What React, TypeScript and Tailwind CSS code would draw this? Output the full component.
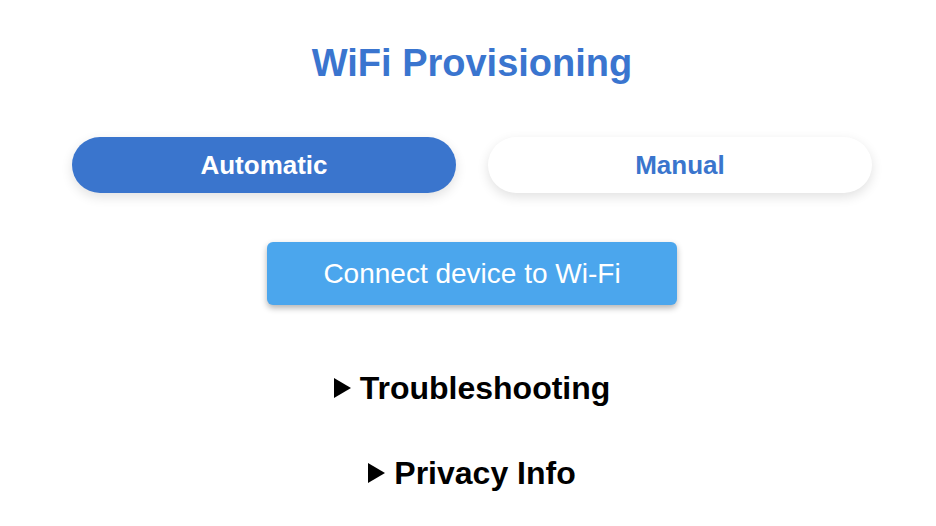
function Arrow() {
  return (
    <svg width="17" height="20" viewBox="0 0 17 20" className="shrink-0">
      <path d="M0 0 L17 10 L0 20 Z" fill="black" />
    </svg>
  );
}

export default function App() {
  return (
    <div className="min-h-screen bg-white pl-2 font-['Liberation_Sans',Arial,sans-serif]">
      <div className="flex flex-col items-center">
        <h1 className="mt-[40px] text-[38px] leading-[46px] font-bold text-[#3a75cf]">WiFi Provisioning</h1>

        <div className="mt-[51px] flex gap-8">
          <button className="h-[56px] w-[384px] rounded-full bg-[#3a75cd] text-[26px] font-bold text-white shadow-[0_4px_12px_rgba(0,0,0,0.12)]">
            Automatic
          </button>
          <button className="h-[56px] w-[384px] rounded-full bg-white text-[26px] font-bold text-[#3a75cd] shadow-[0_4px_12px_rgba(0,0,0,0.12)]">
            Manual
          </button>
        </div>

        <button className="mt-[49px] h-[63px] w-[410px] rounded-md bg-[#4ba6ed] text-[28px] text-white shadow-[0_3px_6px_rgba(0,0,0,0.3)]">
          Connect device to Wi-Fi
        </button>

        <details className="mt-[63px]">
          <summary className="flex cursor-pointer list-none items-center gap-[9px] text-[32px] leading-[40px] font-bold text-black [&::-webkit-details-marker]:hidden">
            <Arrow />
            Troubleshooting
          </summary>
        </details>

        <details className="mt-[45px]">
          <summary className="flex cursor-pointer list-none items-center gap-[9px] text-[32px] leading-[40px] font-bold text-black [&::-webkit-details-marker]:hidden">
            <Arrow />
            Privacy Info
          </summary>
        </details>
      </div>
    </div>
  );
}
